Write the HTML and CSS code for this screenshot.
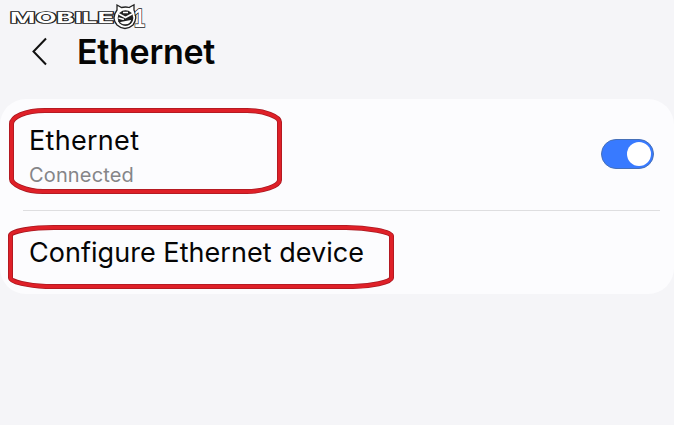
FILE: index.html
```html
<!DOCTYPE html>
<html lang="en">
<head>
  <meta charset="UTF-8">
  <title>Ethernet</title>
  <link rel="stylesheet" href="styles.css">
</head>
<body>
  <svg class="logo" viewBox="0 0 140 30" role="img" aria-label="Mobile01">
    <text class="logo-text" x="2" y="19.200" textLength="104" lengthAdjust="spacingAndGlyphs">MOBILE</text>
    <g class="logo-face">
      <path d="M109 1 L113.500 3.500 Q117.500 2.500 121 3.500 L126 0.800 L126 6 Q130 14 125 21 Q117 28 109 21 Q103 14 109 6 Z"/>
      <circle class="ink" cx="117.500" cy="14" r="7.800"/>
      <path class="eyes" d="M111 10 L117.500 13.500 L124 10 M110.500 14 L116 15.500 M115 8.500 H120"/>
      <path class="mouth" d="M111 17.500 L124 15 Q123 21 117.500 21 Q113 21 111 17.500Z"/>
    </g>
    <text class="logo-one" x="126" y="23" textLength="11" lengthAdjust="spacingAndGlyphs">1</text>
  </svg>

  <header class="header">
    <svg class="back" viewBox="0 0 16 30">
      <path d="M15 1.500 L2.500 14.500 L15 27.500"/>
    </svg>
    <h1>Ethernet</h1>
  </header>

  <main class="card">
    <div class="row row-switch">
      <div>
        <div class="name name-switch">Ethernet</div>
        <div class="status">Connected</div>
      </div>
      <div class="switch"><span class="knob"></span></div>
      <svg class="mark mark-switch" viewBox="0 0 274 86">
        <path d="M36 2.500 H238 C256 2.500 270.500 9 270.500 14 V72 C270.500 78 254 83.500 238 83.500 H34 C16 83.500 2.500 76 2.500 71 V16 C2.500 9 16 2.500 36 2.500 Z"/>
        <path class="inner" d="M36 2.500 H238 C256 2.500 270.500 9 270.500 14 V72 C270.500 78 254 83.500 238 83.500 H34 C16 83.500 2.500 76 2.500 71 V16 C2.500 9 16 2.500 36 2.500 Z"/>
      </svg>
    </div>
    <div class="row row-config">
      <div class="name">Configure Ethernet device</div>
      <svg class="mark mark-config" viewBox="0 0 386 64">
        <path d="M46 2.500 H338 C360 2.500 383.500 7 383.500 11 V53 C383.500 57 362 61.500 345 61.500 H38 C20 60.500 2.500 57 2.500 53 V10.500 C2.500 6 25 2.500 46 2.500 Z"/>
        <path class="inner" d="M46 2.500 H338 C360 2.500 383.500 7 383.500 11 V53 C383.500 57 362 61.500 345 61.500 H38 C20 60.500 2.500 57 2.500 53 V10.500 C2.500 6 25 2.500 46 2.500 Z"/>
      </svg>
    </div>
  </main>
</body>
</html>
```
FILE: styles.css
```css
body {
  margin: 0;
  height: 425px;
  overflow: hidden;
  background-color: #f5f5f8;
  color: #050505;
  font-family: Inter, "Liberation Sans", sans-serif;
}
.logo {
  position: absolute;
  left: 8px;
  top: 4px;
  width: 140px;
  height: 30px;
  overflow: visible;
}
.logo-text, .logo-one {
  font-family: Inter, sans-serif;
  font-weight: 700;
  fill: #fff;
  stroke: #222;
  stroke-width: 1.7px;
  paint-order: stroke;
}
.logo-text {
  font-size: 15px;
}
.logo-one {
  font-family: "Liberation Sans", sans-serif;
  font-size: 26px;
}
.logo-face path {
  fill: #fff;
  stroke: #222;
  stroke-width: 1.3px;
}
.logo-face .ink {
  fill: #222;
}
.logo-face .eyes {
  fill: none;
  stroke: #fff;
  stroke-width: 1.6px;
}
.header {
  display: flex;
  align-items: center;
  height: 63px;
  padding: 20px 0 16px 31px;
}
.back {
  width: 16px;
  height: 30px;
  margin-right: 30px;
}
.back path {
  fill: none;
  stroke: #111;
  stroke-width: 2px;
}
h1 {
  margin: 0;
  font-size: 34px;
  font-weight: 600;
  line-height: 40px;
  letter-spacing: -0.3px;
}
.card {
  height: 195px;
  background-color: #fcfcfe;
  border-radius: 26px;
}
.row {
  position: relative;
  display: flex;
  box-sizing: border-box;
}
.row-switch {
  justify-content: space-between;
  height: 111px;
  margin: 0 14px 0 23px;
  padding: 24px 6px 0 6px;
}
.row-config {
  height: 84px;
  margin: 0 14px 0 23px;
  padding: 24px 6px 0 6px;
  border-top: 1px solid #dedee0;
}
.name {
  font-size: 27px;
  line-height: 35px;
  letter-spacing: 0.04px;
  white-space: nowrap;
}
.name-switch {
  letter-spacing: 0.3px;
}
.status {
  margin-top: 4px;
  color: #858588;
  font-size: 20px;
  line-height: 26px;
  letter-spacing: 0.15px;
}
.switch {
  box-sizing: border-box;
  width: 53px;
  height: 30px;
  margin-top: 16px;
  padding: 2px;
  border: 1px solid #4670b8;
  border-radius: 15px;
  background-color: #387aff;
}
.knob {
  display: block;
  width: 24px;
  height: 24px;
  margin-left: auto;
  border-radius: 50%;
  background-color: #fff;
}
.mark {
  position: absolute;
  fill: none;
  stroke: #a91820;
  stroke-width: 5px;
}
.mark .inner {
  stroke: #df2028;
  stroke-width: 3.4px;
}
.mark-switch {
  left: -14px;
  top: 9px;
  width: 274px;
  height: 86px;
}
.mark-config {
  left: -15px;
  top: 14px;
  width: 386px;
  height: 64px;
}
```
